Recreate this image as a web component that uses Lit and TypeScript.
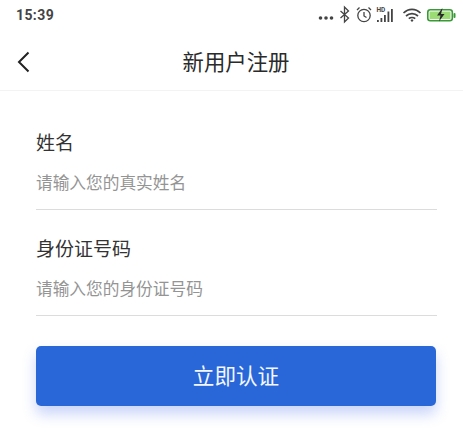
import { LitElement, html, css } from "lit";
import { customElement } from "lit/decorators.js";

@customElement("app-root")
export class AppRoot extends LitElement {
  static styles = css`
    :host { display: block; width: 463px; height: 440px; background: #fff; overflow: hidden; font-family: "Noto Sans CJK SC", "Noto Sans", sans-serif; }
    .status { height: 30px; display: flex; align-items: center; justify-content: space-between; padding: 0 2px 0 16px; box-sizing: border-box; }
    .time { font: 700 14px/1 Roboto, sans-serif; color: #444; letter-spacing: 0.4px; }
    .status svg { display: block; }
    .nav { height: 60px; display: grid; grid-template-columns: 1fr auto 1fr; align-items: center; border-bottom: 1px solid #f3f3f3; padding: 0 8px 0 17px; }
    .nav svg { display: block; margin-top: 3px; }
    .title { font-size: 21.4px; line-height: 28px; color: #2a2a2a; padding-top: 2px; }
    .form { padding: 37px 26px 0 36px; display: flex; flex-direction: column; }
    .field { height: 106px; box-sizing: border-box; display: flex; flex-direction: column; }
    .label { font-size: 19px; line-height: 28px; color: #333; }
    .ph { font-size: 16.7px; line-height: 24px; color: #949494; margin-top: 14px; padding-bottom: 15px; border-bottom: 1px solid #dcdcdc; }
    .btn { margin: 6px 1px 0 0; height: 60px; box-sizing: border-box; padding-bottom: 3px; background: #2967d8; border-radius: 5px; color: #f4f7ff; font-size: 21.6px; display: flex; align-items: center; justify-content: center; box-shadow: 0 8px 14px rgba(60, 100, 230, 0.28); }
  `;

  render() {
    return html`
      <div class="status">
        <span class="time">15:39</span>
        <svg width="145" height="30" viewBox="0 0 145 30" fill="none">
          <g fill="#444"><circle cx="4.500" cy="18" r="1.800"/><circle cx="10" cy="18" r="1.800"/><circle cx="15.500" cy="18" r="1.800"/></g>
          <path d="M24.500 11l8 7-4 4V7l4 4-8 7" stroke="#444" stroke-width="1.300"/>
          <circle cx="48" cy="15.500" r="6.200" stroke="#444" stroke-width="1.300"/>
          <path d="M48 12v4l2.500 1.500M41 10l2.500-2.500M55 10l-2.500-2.500" stroke="#444" stroke-width="1.300"/>
          <text x="60.500" y="12" font-size="6.500" font-weight="700" font-family="Roboto" fill="#444">HD</text>
          <path d="M61 20h1.800v2H61zM64.500 18h1.800v4h-1.800zM68 15h1.800v7H68zM71.500 11.500h1.800V22h-1.800zM75 9h1.800v13H75z" fill="#444"/>
          <path d="M87.500 13c5-4.800 12-4.800 17 0M90 16c3.500-3.200 8.500-3.200 12 0M92.800 18.700c1.800-1.600 4.600-1.600 6.400 0" stroke="#444" stroke-width="1.700"/>
          <path d="M94.500 20.500l1.500-1.500 1.500 1.500L96 22z" fill="#444"/>
          <rect x="111.800" y="9.800" width="24.500" height="11" rx="2.500" stroke="#3a9a3a" stroke-width="1.600"/>
          <rect x="113.500" y="11.500" width="21" height="7.600" fill="#9bdc74"/>
          <path d="M126 8.500l-5 7h3.500l-1.500 6 5.500-7.500h-3.500l1.500-5.500z" fill="#2a2a2a"/>
          <rect x="137.500" y="13" width="2" height="5" rx="1" fill="#3a9a3a"/>
        </svg>
      </div>
      <div class="nav">
        <svg width="14" height="24" viewBox="0 0 14 24" fill="none"><path d="M11.500 2.500L2 12l9.500 9.500" stroke="#222" stroke-width="2"/></svg>
        <span class="title">新用户注册</span>
        <span></span>
      </div>
      <div class="form">
        <div class="field">
          <div class="label">姓名</div>
          <div class="ph">请输入您的真实姓名</div>
        </div>
        <div class="field">
          <div class="label">身份证号码</div>
          <div class="ph">请输入您的身份证号码</div>
        </div>
        <div class="btn">立即认证</div>
      </div>
    `;
  }
}
